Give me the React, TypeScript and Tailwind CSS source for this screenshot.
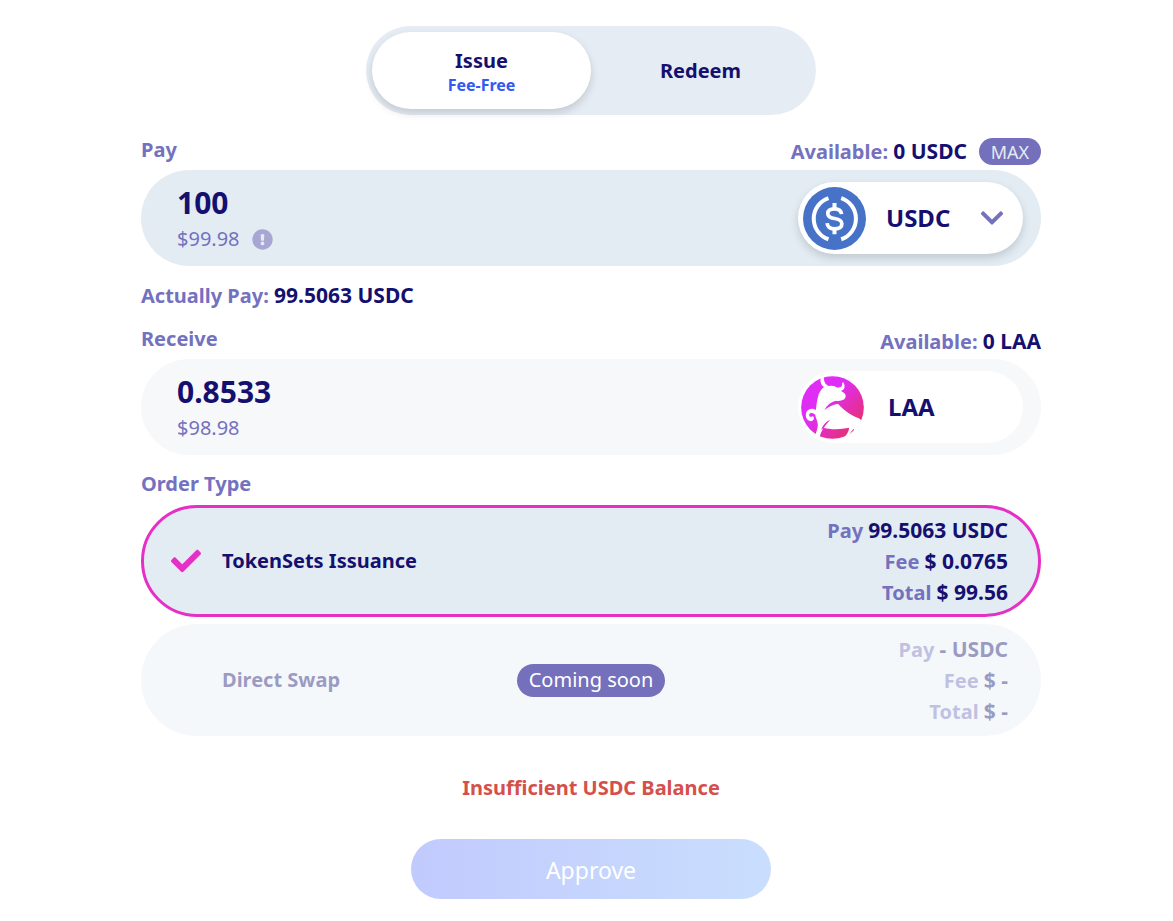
import React, { useState } from 'react';
import { FaCheck, FaChevronDown, FaExclamationCircle } from 'react-icons/fa';

interface Quote {
  pay: string;
  fee: string;
  total: string;
}

interface OrderOptionProps {
  name: string;
  quote: Quote;
  selected?: boolean;
  comingSoon?: boolean;
}

const UsdcLogo: React.FC = () => (
  <svg viewBox="-94 -94 188 188" fill="none" stroke="white" className="w-[63px] h-[63px]" aria-hidden="true">
    <circle r="94" fill="#4673c8" stroke="none" />
    <path d="M-18 -61A65 65 0 0 0 -18 62" strokeWidth="12" />
    <path d="M20 -61A65 65 0 0 1 20 62" strokeWidth="12" />
    <path d="M21 -13C20 -24 12 -29 0 -29C-12 -29 -20 -24 -20 -15C-20 -5 -12 -2 0 0C13 2 22 6 22 16C22 26 13 31 0 31C-13 31 -21 25 -22 14" strokeWidth="11" />
    <path d="M0 -46V-28M0 30V47" strokeWidth="12" />
  </svg>
);

const BullLogo: React.FC = () => (
  <svg viewBox="17 17 191 191" className="w-[63px] h-[63px]" aria-hidden="true">
    <defs>
      <linearGradient id="bull-fill" gradientUnits="userSpaceOnUse" x1="60" y1="60" x2="180" y2="170">
        <stop offset="0.3" stopColor="#e02df5" />
        <stop offset="1" stopColor="#e5307a" />
      </linearGradient>
    </defs>
    <circle cx="112.5" cy="112.5" r="95" fill="url(#bull-fill)" />
    <path
      fill="white"
      d="M77 20C74 34 78 46 87 50C78 56 71 67 68 82C65 94 64 106 62 120C52 113 38 116 33 127C29 140 34 153 47 154C56 153 59 144 53 138C49 142 42 142 42 136C42 127 52 128 60 134C61 144 67 152 68 164C68 176 64 186 59 198L72 207C75 194 80 184 85 174C104 179 128 180 148 176L163 174C162 186 156 195 145 206L160 200C165 190 172 182 178 176L174 197L192 184C196 174 197 162 198 152L202 158C201 150 197 147 190 144C166 136 142 118 122 93C132 93 140 92 146 89C152 86 153 80 152 74C149 69 143 66 138 62C149 60 152 50 146 36L141 38C144 48 138 52 127 52C119 47 112 45 103 47C93 46 86 36 86 20Z"
    />
    <path fill="url(#bull-fill)" d="M124 92C107 95 95 106 88 121C99 111 111 104 130 101Z" />
    <path fill="url(#bull-fill)" d="M106 150C93 155 84 165 78 180L86 175C92 166 98 158 106 150Z" />
  </svg>
);

const QuoteLine: React.FC<{ label: string; value: string }> = ({ label, value }) => (
  <p className="text-[#7471bf]">
    {label} <span className="text-[21px] text-[#15106f]">{value}</span>
  </p>
);

const OrderOption: React.FC<OrderOptionProps> = ({ name, quote, selected, comingSoon }) => (
  <label
    className={
      selected
        ? 'relative grid grid-cols-3 items-center h-28 rounded-full bg-[#e3ecf3] border-3 border-[#e62fc6] px-[30px]'
        : 'relative grid grid-cols-3 items-center h-28 rounded-full bg-[#f4f8fb] border-3 border-[#f4f8fb] px-[30px]'
    }
  >
    <input type="radio" name="order-type" defaultChecked={selected} disabled={comingSoon} className="sr-only" />
    <span className={comingSoon ? 'flex items-center gap-6 opacity-40' : 'flex items-center gap-6'}>
      <span className="w-6 shrink-0 flex justify-center text-[#e62fc6]">{selected && <FaCheck size={30} className="shrink-0" />}</span>
      <span className="text-[#15106f] whitespace-nowrap">{name}</span>
    </span>
    <span className="flex justify-center">
      {comingSoon && (
        <span className="h-[33px] px-3 flex items-center rounded-full bg-[#7470bb] text-white font-normal whitespace-nowrap">
          Coming soon
        </span>
      )}
    </span>
    <div className={comingSoon ? 'text-right whitespace-nowrap leading-[31px] opacity-40' : 'text-right whitespace-nowrap leading-[31px]'}>
      <QuoteLine label="Pay" value={quote.pay} />
      <QuoteLine label="Fee" value={quote.fee} />
      <QuoteLine label="Total" value={quote.total} />
    </div>
  </label>
);

const App: React.FC = () => {
  const [amount, setAmount] = useState('100');

  return (
    <main className="min-h-screen bg-white pt-[26px] pb-5 pl-[9px] font-['Noto_Sans','Open_Sans',sans-serif] text-xl leading-6 font-bold text-[#7471bf]">
      <div className="max-w-[900px] mx-auto">
        <div className="max-w-[450px] mx-auto h-[89px] p-1.5 grid grid-cols-2 rounded-full bg-[#e5ecf4] text-[#15106f]">
          <button type="button" className="pt-1 rounded-full bg-white shadow-[0_4px_8px_rgba(0,0,0,0.15)]">
            Issue
            <span className="block text-base leading-6 text-[#3358f4]">Fee-Free</span>
          </button>
          <button type="button" className="rounded-full">Redeem</button>
        </div>

        <div className="mt-[23px] mb-[5px] h-[27px] flex items-start justify-between">
          <label htmlFor="pay-amount">Pay</label>
          <div className="h-[27px] flex items-center gap-3">
            <p className="leading-7">
              Available: <span className="text-[21px] text-[#15106f]">0 USDC</span>
            </p>
            <button type="button" className="w-[62px] h-[27px] rounded-full bg-[#7470bb] text-[#e3ecf3] text-lg leading-6 font-normal">
              MAX
            </button>
          </div>
        </div>
        <div className="h-24 pl-9 pr-[18px] flex items-center justify-between rounded-full bg-[#e3ecf3]">
          <div className="pt-0.5">
            <input
              id="pay-amount"
              type="text"
              inputMode="decimal"
              value={amount}
              onChange={(e) => setAmount(e.target.value)}
              className="block w-full h-10 bg-transparent outline-none text-3xl leading-10 text-[#15106f]"
            />
            <p className="flex items-center gap-3 leading-8 font-normal">
              $99.98 <FaExclamationCircle size={21} className="text-[#a8a6d2]" />
            </p>
          </div>
          <button type="button" className="w-[225px] h-[72px] pl-[5px] pr-[18px] flex items-center rounded-full bg-white text-[#15106f] text-2xl shadow-[0_4px_8px_rgba(0,0,0,0.15)]">
            <UsdcLogo />
            <span className="ml-5 flex-1 text-left">USDC</span>
            <FaChevronDown size={26} className="text-[#7471bf]" />
          </button>
        </div>

        <p className="mt-[15px] h-7 leading-7">
          Actually Pay: <span className="text-[21px] text-[#15106f]">99.5063 USDC</span>
        </p>

        <div className="mt-[18px] mb-[5px] h-[27px] flex items-start justify-between">
          <h2>Receive</h2>
          <p className="leading-7">
            Available: <span className="text-[21px] text-[#15106f]">0 LAA</span>
          </p>
        </div>
        <div className="h-24 pl-9 pr-[18px] flex items-center justify-between rounded-full bg-[#f7f8fa]">
          <div className="pt-0.5">
            <p className="text-3xl leading-10 text-[#15106f]">0.8533</p>
            <p className="leading-8 font-normal">$98.98</p>
          </div>
          <div className="w-[225px] h-[72px] pl-[3px] flex items-center rounded-full bg-white text-[#15106f] text-2xl">
            <BullLogo />
            <span className="ml-6">LAA</span>
          </div>
        </div>

        <h2 className="mt-[17px] mb-[9px]">Order Type</h2>
        <div className="flex flex-col gap-[7px]">
          <OrderOption name="TokenSets Issuance" quote={{ pay: '99.5063 USDC', fee: '$ 0.0765', total: '$ 99.56' }} selected />
          <OrderOption name="Direct Swap" quote={{ pay: '- USDC', fee: '$ -', total: '$ -' }} comingSoon />
        </div>

        <p className="mt-10 text-center leading-6 text-[#d5504b]">Insufficient USDC Balance</p>

        <div className="mt-[39px] flex justify-center">
          <button type="button" className="w-full max-w-[360px] h-[60px] pt-0.5 rounded-full bg-linear-to-r from-[#c1cafd] to-[#c9defd] text-white text-[23px] font-normal">
            Approve
          </button>
        </div>
      </div>
    </main>
  );
};

export default App;
